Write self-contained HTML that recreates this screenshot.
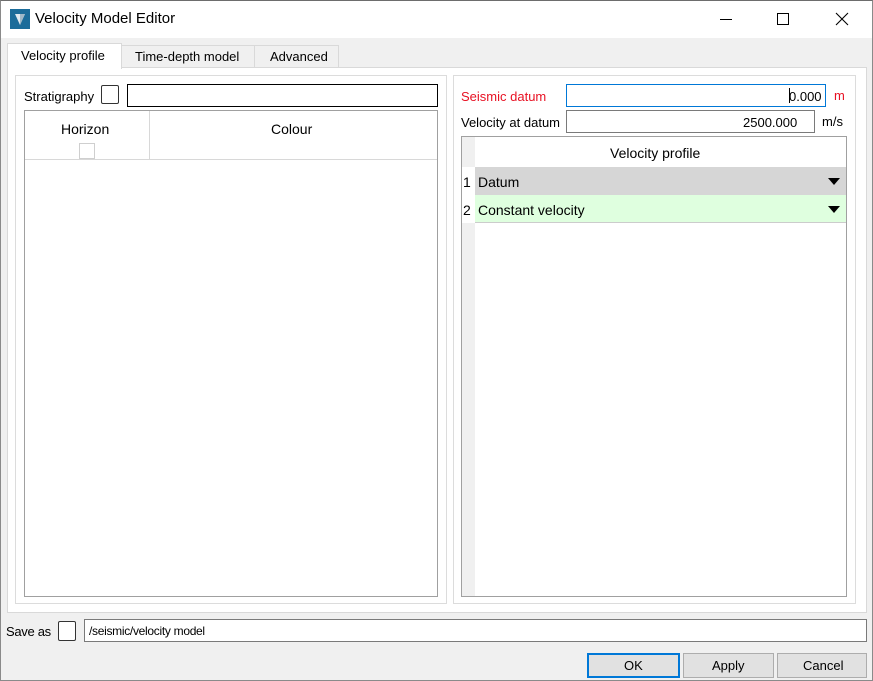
<!DOCTYPE html>
<html><head><meta charset="utf-8"><style>
*{box-sizing:border-box;margin:0;padding:0}
body{width:873px;height:681px;overflow:hidden;background:#f0f0f0;font-family:"Liberation Sans",sans-serif;font-size:13px;color:#000;position:relative}
.a{position:absolute}
.t{position:absolute;white-space:nowrap}
</style></head><body>
<div class="a" style="left:0;top:0;width:873px;height:681px;border:1px solid #8a8a8a;border-top-color:#6d6d6d"></div>
<div class="a" style="left:1px;top:1px;width:871px;height:37px;background:#fff"></div>
<div class="a" style="left:10px;top:9px;width:20px;height:20px;background:#1b6c9a"></div>
<svg class="a" style="left:10px;top:9px" width="20" height="20"><path d="M5 5 L15 5 L10 16 Z" fill="#dfe9f0"/><path d="M10 5 L15 5 L10 16Z" fill="#9fb8c8"/></svg>
<div class="t" style="left:35px;top:10px;font-size:15px">Velocity Model Editor</div>
<div class="a" style="left:720px;top:19px;width:12px;height:1px;background:#000"></div>
<div class="a" style="left:777px;top:13px;width:12px;height:12px;border:1px solid #000"></div>
<svg class="a" style="left:835px;top:12px" width="14" height="14"><path d="M1 1L13 13M13 1L1 13" stroke="#000" stroke-width="1.1"/></svg>
<div class="a" style="left:121px;top:45px;width:134px;height:23px;background:#f0f0f0;border:1px solid #d9d9d9"></div>
<div class="t" style="left:135px;top:49px">Time-depth model</div>
<div class="a" style="left:254px;top:45px;width:85px;height:23px;background:#f0f0f0;border:1px solid #d9d9d9"></div>
<div class="t" style="left:270px;top:49px">Advanced</div>
<div class="a" style="left:7px;top:67px;width:860px;height:546px;background:#fff;border:1px solid #d9d9d9"></div>
<div class="a" style="left:7px;top:43px;width:115px;height:26px;background:#fff;border:1px solid #d9d9d9;border-bottom:none"></div>
<div class="t" style="left:21px;top:48px">Velocity profile</div>
<div class="a" style="left:15px;top:75px;width:432px;height:529px;border:1px solid #dcdcdc"></div>
<div class="t" style="left:24px;top:89px">Stratigraphy</div>
<div class="a" style="left:101px;top:85px;width:18px;height:19px;border:1px solid #333;border-radius:2px;background:#fff"></div>
<div class="a" style="left:127px;top:84px;width:311px;height:23px;border:1px solid #000"></div>
<div class="a" style="left:24px;top:110px;width:414px;height:487px;border:1px solid #a0a0a0"></div>
<div class="a" style="left:25px;top:159px;width:412px;height:1px;background:#d8d8d8"></div>
<div class="a" style="left:149px;top:111px;width:1px;height:48px;background:#d8d8d8"></div>
<div class="t" style="left:61px;top:121px;font-size:14px">Horizon</div>
<div class="t" style="left:271px;top:121px;font-size:14px">Colour</div>
<div class="a" style="left:79px;top:143px;width:16px;height:16px;border:1px solid #cfcfcf"></div>
<div class="a" style="left:453px;top:75px;width:403px;height:529px;border:1px solid #dcdcdc"></div>
<div class="t" style="left:461px;top:89px;color:#e81123">Seismic datum</div>
<div class="a" style="left:566px;top:84px;width:260px;height:23px;border:1px solid #0078d7"></div>
<div class="t" style="left:789px;top:89px">0.000</div>
<div class="a" style="left:789px;top:88px;width:1px;height:15px;background:#000"></div>
<div class="t" style="left:834px;top:88px;color:#e81123">m</div>
<div class="t" style="left:461px;top:115px">Velocity at datum</div>
<div class="a" style="left:566px;top:110px;width:249px;height:23px;border:1px solid #7a7a7a"></div>
<div class="t" style="left:743px;top:115px">2500.000</div>
<div class="t" style="left:822px;top:114px">m/s</div>
<div class="a" style="left:461px;top:136px;width:386px;height:461px;border:1px solid #a0a0a0;background:#fff"></div>
<div class="a" style="left:462px;top:137px;width:13px;height:459px;background:#f0f0f0"></div>
<div class="t" style="left:610px;top:145px;font-size:14px">Velocity profile</div>
<div class="a" style="left:475px;top:167px;width:371px;height:28px;background:#d6d6d6"></div>
<div class="a" style="left:475px;top:195px;width:371px;height:28px;background:#dfffdf;border-bottom:1px solid #ccc"></div>
<div class="a" style="left:462px;top:167px;width:13px;height:56px;background:#fff"></div>
<div class="t" style="left:463px;top:174px;font-size:14px">1</div>
<div class="t" style="left:463px;top:202px;font-size:14px">2</div>
<div class="t" style="left:478px;top:174px;font-size:14px">Datum</div>
<div class="t" style="left:478px;top:202px;font-size:14px">Constant velocity</div>
<svg class="a" style="left:828px;top:178px" width="13" height="8"><path d="M0 0H12L6 7Z"/></svg>
<svg class="a" style="left:828px;top:206px" width="13" height="8"><path d="M0 0H12L6 7Z"/></svg>
<div class="t" style="left:6px;top:624px;letter-spacing:-0.3px">Save as</div>
<div class="a" style="left:58px;top:621px;width:18px;height:20px;border:1px solid #333;border-radius:2px;background:#fff"></div>
<div class="a" style="left:84px;top:619px;width:783px;height:23px;border:1px solid #7a7a7a;background:#fff"></div>
<div class="t" style="left:89px;top:624px;font-size:12px;letter-spacing:-0.3px">/seismic/velocity model</div>
<div class="a" style="left:587px;top:653px;width:93px;height:25px;border:2px solid #0078d7;background:#e1e1e1"></div>
<div class="t" style="left:624px;top:658px">OK</div>
<div class="a" style="left:683px;top:653px;width:91px;height:25px;border:1px solid #adadad;background:#e1e1e1"></div>
<div class="t" style="left:712px;top:658px">Apply</div>
<div class="a" style="left:777px;top:653px;width:90px;height:25px;border:1px solid #adadad;background:#e1e1e1"></div>
<div class="t" style="left:803px;top:658px">Cancel</div>
</body></html>
